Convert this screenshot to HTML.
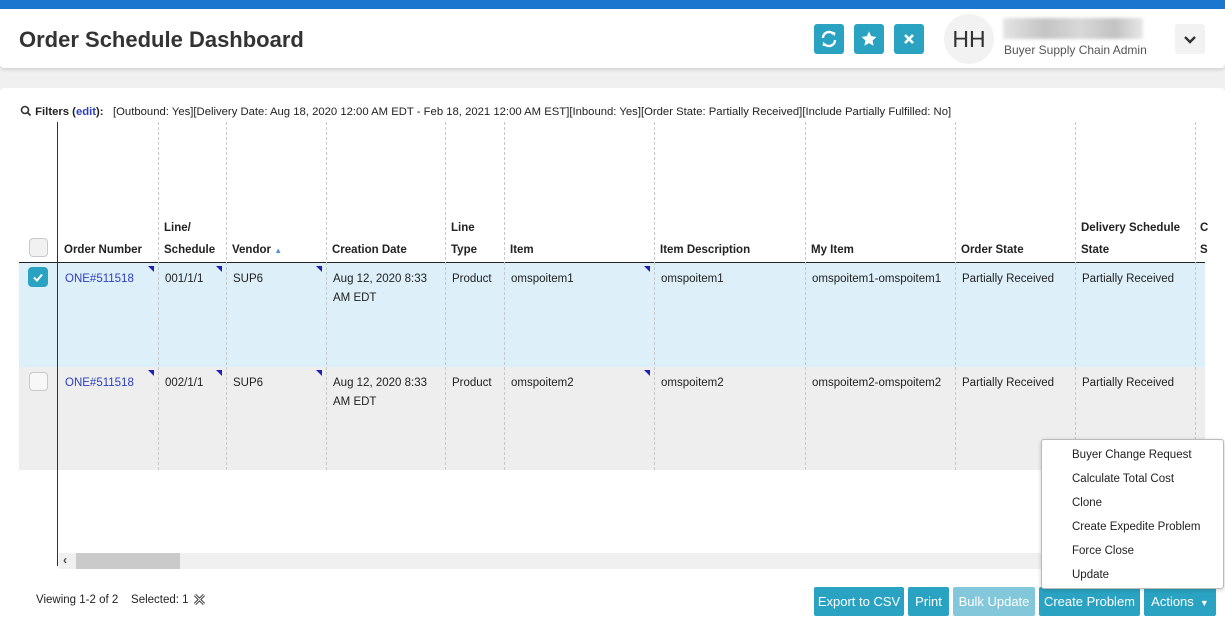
<!DOCTYPE html>
<html><head><meta charset="utf-8"><style>
*{margin:0;padding:0;box-sizing:border-box}
body{width:1225px;height:632px;overflow:hidden;background:#f0f0f0;font-family:"Liberation Sans",sans-serif;font-size:11.5px;color:#222;position:relative}
.a{position:absolute;white-space:nowrap}
.top{left:0;top:0;width:1225px;height:9px;background:#1b76d0}
.hdr{left:0;top:9px;width:1225px;height:59px;background:#fff;box-shadow:0 2px 3px rgba(0,0,0,.12);border-radius:0 0 4px 4px}
.main{left:0;top:88px;width:1225px;height:544px;background:#fff;border-radius:4px 4px 0 0}
.ib{width:30px;height:30px;background:#2aa3c2;border-radius:3px;top:24px}
.dl{top:122px;height:348px;border-left:1px dashed #c8c8c8}
.th{font-weight:bold;font-size:11.5px;color:#222}
.cb{width:19px;height:19px;border:1px solid #c9c9c9;border-radius:4px;background:#f1f1f1}
.tri{width:0;height:0;border-top:6px solid #1f1fb8;border-left:6px solid transparent}
.btn{top:587px;height:29px;background:#2aa3c2;color:#fff;font-size:13px;line-height:29px;text-align:center;border-radius:2px}
.mi{left:1072px;font-size:11.5px;color:#222}
</style></head><body>
<div class="a top"></div>
<div class="a hdr"></div>
<div class="a" style="left:19px;top:27px;font-size:22px;font-weight:bold;color:#333">Order Schedule Dashboard</div>
<div class="a ib" style="left:814px"><svg width="30" height="30" viewBox="0 0 30 30"><path d="M9 14a6 6 0 0 1 10.5-4M21 16a6 6 0 0 1-10.5 4" stroke="#fff" stroke-width="2.4" fill="none"/><path d="M17.5 7.5l4 1-1 4z M12.5 22.5l-4-1 1-4z" fill="#fff"/></svg></div>
<div class="a ib" style="left:854px"><svg width="30" height="30" viewBox="0 0 30 30"><path d="M15 7.5l2.3 4.8 5.2.6-3.9 3.6 1 5.2-4.6-2.6-4.6 2.6 1-5.2-3.9-3.6 5.2-.6z" fill="#fff"/></svg></div>
<div class="a ib" style="left:894px"><svg width="30" height="30" viewBox="0 0 30 30"><path d="M11 11l8 8M19 11l-8 8" stroke="#fff" stroke-width="2.6"/></svg></div>
<div class="a" style="left:944px;top:14px;width:50px;height:50px;border-radius:50%;background:#f2f2f2;font-size:23px;line-height:50px;text-align:center;color:#333">HH</div>
<div class="a" style="left:1003px;top:18px;width:140px;height:21px;background:linear-gradient(90deg,#e4e4e4,#c4c4c4 30%,#d8d8d8 55%,#c2c2c2 80%,#e8e8e8);filter:blur(1.5px)"></div>
<div class="a" style="left:1004px;top:43px;font-size:12px;color:#555">Buyer Supply Chain Admin</div>
<div class="a" style="left:1175px;top:24px;width:30px;height:30px;background:#f2f2f2;border-radius:3px"><svg width="30" height="30" viewBox="0 0 30 30"><path d="M10 13l5 5 5-5" stroke="#333" stroke-width="2.4" fill="none"/></svg></div>
<div class="a main"></div>
<div class="a" style="left:20px;top:105px;font-size:11.3px"><svg width="12" height="12" viewBox="0 0 12 12" style="vertical-align:-2px"><circle cx="5" cy="5" r="3.5" stroke="#333" stroke-width="1.6" fill="none"/><path d="M7.5 7.5l3 3" stroke="#333" stroke-width="1.8"/></svg> <b>Filters (<span style="color:#2a3ec4">edit</span>):</b>&nbsp;&nbsp; [Outbound: Yes][Delivery Date: Aug 18, 2020 12:00 AM EDT - Feb 18, 2021 12:00 AM EST][Inbound: Yes][Order State: Partially Received][Include Partially Fulfilled: No]</div>
<div class="a" style="left:19px;top:263px;width:1186px;height:104px;background:#ddeff9"></div>
<div class="a" style="left:19px;top:367px;width:1186px;height:103px;background:#eeeeee"></div>
<div class="a" style="left:19px;top:262px;width:1186px;height:1px;background:#222"></div>
<div class="a" style="left:57px;top:122px;width:1px;height:444px;background:#333"></div>
<div class="a dl" style="left:158px"></div><div class="a dl" style="left:226px"></div><div class="a dl" style="left:326px"></div><div class="a dl" style="left:445px"></div><div class="a dl" style="left:504px"></div><div class="a dl" style="left:654px"></div><div class="a dl" style="left:805px"></div><div class="a dl" style="left:955px"></div><div class="a dl" style="left:1075px"></div><div class="a dl" style="left:1195px"></div>
<div class="a cb" style="left:29px;top:238px"></div>
<div class="a th" style="left:64px;top:244px">Order Number</div>
<div class="a th" style="left:164px;top:222px">Line/</div><div class="a th" style="left:164px;top:244px">Schedule</div>
<div class="a th" style="left:232px;top:244px">Vendor <span style="color:#5a8fd0;font-size:8px">▲</span></div>
<div class="a th" style="left:332px;top:244px">Creation Date</div>
<div class="a th" style="left:451px;top:222px">Line</div><div class="a th" style="left:451px;top:244px">Type</div>
<div class="a th" style="left:510px;top:244px">Item</div>
<div class="a th" style="left:660px;top:244px">Item Description</div>
<div class="a th" style="left:811px;top:244px">My Item</div>
<div class="a th" style="left:961px;top:244px">Order State</div>
<div class="a th" style="left:1081px;top:222px">Delivery Schedule</div><div class="a th" style="left:1081px;top:244px">State</div>
<div class="a th" style="left:1200px;top:222px">C</div><div class="a th" style="left:1200px;top:244px">S</div>
<div class="a" style="left:28px;top:267px;width:20px;height:20px;background:#2aa3c2;border-radius:4px"><svg width="20" height="20" viewBox="0 0 20 20"><path d="M6 10.5l3 3 5-6" stroke="#fff" stroke-width="2" fill="none"/></svg></div>
<div class="a" style="left:65px;top:273px;color:#2a3ec4">ONE#511518</div>
<div class="a" style="left:165px;top:273px">001/1/1</div>
<div class="a" style="left:233px;top:273px">SUP6</div>
<div class="a" style="left:333px;top:270px;line-height:19px;white-space:normal;width:110px">Aug 12, 2020 8:33 AM EDT</div>
<div class="a" style="left:452px;top:273px">Product</div>
<div class="a" style="left:511px;top:273px">omspoitem1</div>
<div class="a" style="left:661px;top:273px">omspoitem1</div>
<div class="a" style="left:812px;top:273px">omspoitem1-omspoitem1</div>
<div class="a" style="left:962px;top:273px">Partially Received</div>
<div class="a" style="left:1082px;top:273px">Partially Received</div>
<div class="a cb" style="left:29px;top:372px;background:#f7f7f7"></div>
<div class="a" style="left:65px;top:377px;color:#2a3ec4">ONE#511518</div>
<div class="a" style="left:165px;top:377px">002/1/1</div>
<div class="a" style="left:233px;top:377px">SUP6</div>
<div class="a" style="left:333px;top:374px;line-height:19px;white-space:normal;width:110px">Aug 12, 2020 8:33 AM EDT</div>
<div class="a" style="left:452px;top:377px">Product</div>
<div class="a" style="left:511px;top:377px">omspoitem2</div>
<div class="a" style="left:661px;top:377px">omspoitem2</div>
<div class="a" style="left:812px;top:377px">omspoitem2-omspoitem2</div>
<div class="a" style="left:962px;top:377px">Partially Received</div>
<div class="a" style="left:1082px;top:377px">Partially Received</div>
<div class="a tri" style="left:148px;top:266px"></div><div class="a tri" style="left:216px;top:266px"></div><div class="a tri" style="left:316px;top:266px"></div><div class="a tri" style="left:644px;top:266px"></div>
<div class="a tri" style="left:148px;top:370px"></div><div class="a tri" style="left:216px;top:370px"></div><div class="a tri" style="left:316px;top:370px"></div><div class="a tri" style="left:644px;top:370px"></div>
<div class="a" style="left:59px;top:553px;width:1146px;height:16px;background:#f0f0f0"></div>
<div class="a" style="left:76px;top:553px;width:104px;height:16px;background:#cacaca"></div>
<div class="a" style="left:63px;top:553px;font-size:12px;font-weight:bold;color:#444">‹</div>
<div class="a" style="left:36px;top:594px;font-size:11.5px">Viewing 1-2 of 2 &nbsp;&nbsp; Selected: 1</div>
<div class="a" style="left:193px;top:593px"><svg width="13" height="13" viewBox="0 0 13 13"><path d="M2 2l9 9M11 2l-9 9" stroke="#333" stroke-width="3"/><path d="M2 2l9 9M11 2l-9 9" stroke="#fff" stroke-width="1"/></svg></div>
<div class="a btn" style="left:814px;width:90px">Export to CSV</div>
<div class="a btn" style="left:908px;width:41px">Print</div>
<div class="a btn" style="left:953px;width:82px;background:#83c7da">Bulk Update</div>
<div class="a btn" style="left:1039px;width:101px">Create Problem</div>
<div class="a btn" style="left:1144px;width:72px">Actions <span style="font-size:9px">&nbsp;▼</span></div>
<div class="a" style="left:1041px;top:439px;width:183px;height:150px;background:#fff;border:1px solid #bbb;border-radius:3px;box-shadow:0 1px 4px rgba(0,0,0,.2)"></div>
<div class="a mi" style="top:449px">Buyer Change Request</div>
<div class="a mi" style="top:473px">Calculate Total Cost</div>
<div class="a mi" style="top:497px">Clone</div>
<div class="a mi" style="top:521px">Create Expedite Problem</div>
<div class="a mi" style="top:545px">Force Close</div>
<div class="a mi" style="top:569px">Update</div>
</body></html>
